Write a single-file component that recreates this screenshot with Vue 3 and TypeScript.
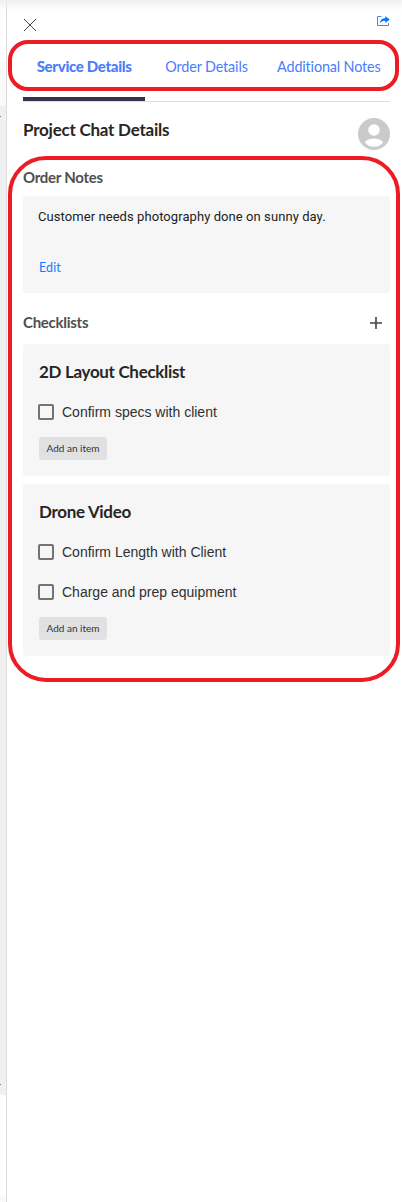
<script setup lang="ts">
import { ref } from 'vue'

interface Item { label: string; done: boolean }
interface Checklist { title: string; items: Item[] }

const tabs: string[] = ['Service Details', 'Order Details', 'Additional Notes']
const activeTab = ref(0)
const checklists = ref<Checklist[]>([
  { title: '2D Layout Checklist', items: [{ label: 'Confirm specs with client', done: false }] },
  {
    title: 'Drone Video',
    items: [
      { label: 'Confirm Length with Client', done: false },
      { label: 'Charge and prep equipment', done: false },
    ],
  },
])
</script>

<template>
  <div class="screen">
    <div class="backdrop">
      <div class="band header-band"></div>
      <div class="band light-band"></div>
      <div class="band grey-band"><i class="tick"></i><i class="tick"></i></div>
      <div class="band gap-band"></div>
      <div class="band light-band last"></div>
    </div>
    <main class="panel">
      <header class="top">
        <svg class="close" width="14" height="14" viewBox="0 0 14 14"><path d="M1 1 13 13M13 1 1 13" /></svg>
        <svg class="share" width="13" height="10" viewBox="0 0 13 10">
          <path d="M4.5 .5H.5V9.5H11.5V7" fill="none" stroke="#3d8bfd" />
          <path d="M8.4 0 12.8 3.5 8.4 7V5C5.7 4.9 4.2 5.5 2.7 7.2 3.1 4.2 5 2.2 8.4 2Z" fill="#0d7bff" />
        </svg>
      </header>
      <nav class="tabs">
        <a v-for="(tab, i) in tabs" :key="tab" class="tab" :class="{ active: i === activeTab }" @click="activeTab = i"><span>{{ tab }}</span></a>
      </nav>
      <div class="heading">
        <h1>Project Chat Details</h1>
        <svg class="avatar" width="32" height="32" viewBox="0 0 32 32">
          <circle cx="16" cy="16" r="16" fill="#cacaca" />
          <circle cx="16" cy="12" r="5.8" fill="#fff" />
          <path d="M6.8 24.2C8.5 21.6 12.5 20.4 16 20.4s7.5 1.2 9.2 3.8C23 27.3 19.6 28.8 16 28.8s-7-1.5-9.2-4.6Z" fill="#fff" />
        </svg>
      </div>
      <h2 class="notes-title">Order Notes</h2>
      <section class="card note">
        <p>Customer needs photography done on sunny day.</p>
        <a>Edit</a>
      </section>
      <div class="lists-head">
        <h2>Checklists</h2>
        <svg width="12" height="12" viewBox="0 0 12 12"><path d="M6 0V12M0 6H12" stroke="#444" stroke-width="1.6" /></svg>
      </div>
      <section v-for="list in checklists" :key="list.title" class="card checklist">
        <h3>{{ list.title }}</h3>
        <label v-for="item in list.items" :key="item.label" class="item">
          <input v-model="item.done" type="checkbox" /><span>{{ item.label }}</span>
        </label>
        <button type="button">Add an item</button>
      </section>
    </main>
    <div class="outline outline-tabs"></div>
    <div class="outline outline-body"></div>
  </div>
</template>

<style>
body { background: #fff; }
</style>

<style scoped>
* { box-sizing: border-box; }
.screen { position: relative; display: flex; width: 402px; height: 1202px; overflow: hidden; background: #fff; font-family: Lato, "Liberation Sans", sans-serif; }
.screen::before { content: ""; position: absolute; inset: 0 0 auto; height: 10px; background: linear-gradient(#f0f0f0, rgba(255, 255, 255, 0)); }
.backdrop { width: 6px; display: flex; flex-direction: column; }
.header-band { height: 62px; }
.light-band { height: 44px; background: #fafafa; }
.grey-band { height: 989px; background: #f0f0f0; display: flex; flex-direction: column; justify-content: space-between; padding: 10px 0; }
.tick { width: 1px; height: 1px; background: #777; }
.gap-band { height: 101px; }
.last { height: 6px; }
.panel { flex: 1; border-left: 1px solid #dcdcdc; padding: 0 12px 0 16px; }
.top { height: 45px; display: flex; justify-content: space-between; align-items: flex-start; padding-top: 16px; }
.close { margin-top: 2px; fill: none; stroke: #444; stroke-width: 1; }
.tabs { height: 57px; display: flex; border-bottom: 1px solid #dedede; }
.tab { flex: 1 1 0; display: flex; justify-content: center; padding-top: 12px; border-bottom: 4px solid transparent; color: #4a7dfc; font-size: 14.4px; line-height: 20px; letter-spacing: -.15px; white-space: nowrap; cursor: pointer; }
.tab.active { border-color: #31344b; padding-top: 11px; font-size: 15px; font-weight: 900; letter-spacing: -.3px; }
h1, h2, h3, p { margin: 0; }
h1, h3 { font-size: 17px; line-height: 20px; letter-spacing: -.23px; color: #262626; white-space: nowrap; }
.heading { height: 65px; display: flex; justify-content: space-between; padding-top: 18px; }
.avatar { margin-top: -2px; }
h2 { font-size: 15px; line-height: 20px; letter-spacing: -.27px; color: #4f4f4f; }
.notes-title { height: 29px; }
.card { background: #f6f6f6; border-radius: 3px; }
.note { height: 97px; padding: 12px 15px; }
.note p { height: 52px; font: 13px/18px Roboto, sans-serif; color: #222; letter-spacing: .07px; white-space: nowrap; }
.note a { display: block; margin-left: 1px; color: #147bff; font-size: 12.5px; line-height: 16px; letter-spacing: .1px; }
.lists-head { height: 51px; display: flex; justify-content: space-between; padding: 19px 8px 0 0; }
.lists-head svg { margin-top: 5px; }
.checklist { padding: 18px 16px 16px 15px; margin-bottom: 8px; }
h3 { margin: 0 0 10px 1px; letter-spacing: -.32px; }
.item { height: 40px; display: flex; align-items: center; gap: 8px; font: 14px/20px "Liberation Sans", sans-serif; color: #303030; }
.item input { appearance: none; width: 16px; height: 16px; margin: 0; border: 2px solid #737373; border-radius: 2px; }
.item input:checked { background: #737373; }
button { display: block; height: 23px; width: 68px; margin: 5px 0 0 1px; padding: 0; border: 0; border-radius: 3px; background: #e1e1e1; color: #333; font: 10px/23px Lato, sans-serif; white-space: nowrap; }
.outline { position: absolute; left: 8px; border: 4px solid #ed1c24; pointer-events: none; }
.outline-tabs { top: 40px; width: 391px; height: 51px; border-radius: 20px; }
.outline-body { top: 156px; width: 392px; height: 526px; border-radius: 38px; }
</style>
